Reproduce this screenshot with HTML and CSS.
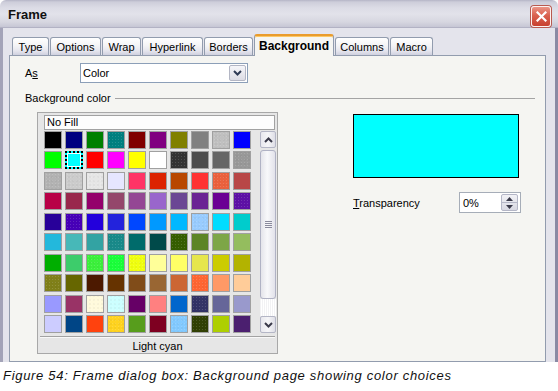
FILE: index.html
```html
<!DOCTYPE html>
<html>
<head>
<meta charset="utf-8">
<link rel="stylesheet" href="styles.css">
</head>
<body>
<div class="dialog">
  <div class="titlebar">
    <span class="title">Frame</span>
    <span class="close"><svg width="11" height="11" viewBox="0 0 11 11"><path d="M1.5 1.5L9.5 9.5M9.5 1.5L1.5 9.5" stroke="#fff" stroke-width="2.2" stroke-linecap="square"/></svg></span>
  </div>
  <div class="body">
    <div class="tabs">
      <div class="tab t-type">Type</div>
      <div class="tab t-options">Options</div>
      <div class="tab t-wrap">Wrap</div>
      <div class="tab t-hyper">Hyperlink</div>
      <div class="tab t-borders">Borders</div>
      <div class="tab t-bg active">Background</div>
      <div class="tab t-columns">Columns</div>
      <div class="tab t-macro">Macro</div>
    </div>
    <div class="page">
      <div class="row-as">
        <span class="lbl-as">A<u>s</u></span>
        <div class="select">
          <span>Color</span>
          <span class="sel-btn"><svg width="9" height="6" viewBox="0 0 9 6"><path d="M1 1l3.5 3.5L8 1" stroke="#2f3b55" stroke-width="2" fill="none"/></svg></span>
        </div>
      </div>
      <div class="section-head"><span>Background color</span><span class="rule"></span></div>
      <div class="content">
        <div class="picker">
          <div class="nofill">No Fill</div>
          <div class="grid-area">
            <div class="swatches">
              <i style="background:#000000"></i><i style="background:#000080"></i><i style="background:#008000"></i><i class="d" style="background-color:#008080"></i><i style="background:#800000"></i><i style="background:#800080"></i><i style="background:#808000"></i><i style="background:#808080"></i><i class="d" style="background-color:#c0c0c0"></i><i style="background:#0000ff"></i>
              <i style="background:#00ff00"></i><i class="sel" style="background:#00ffff"></i><i style="background:#ff0000"></i><i style="background:#ff00ff"></i><i style="background:#ffff00"></i><i style="background:#ffffff"></i><i class="d" style="background-color:#333333"></i><i style="background:#4c4c4c"></i><i style="background:#666666"></i><i class="d" style="background-color:#999999"></i>
              <i class="d" style="background-color:#b3b3b3"></i><i class="d" style="background-color:#cccccc"></i><i class="d" style="background-color:#e6e6e6"></i><i style="background:#e6e6ff"></i><i style="background:#ff3366"></i><i style="background:#dc2300"></i><i style="background:#b84700"></i><i style="background:#ff3333"></i><i class="d" style="background-color:#eb613d"></i><i style="background:#b84747"></i>
              <i style="background:#b80047"></i><i style="background:#99284c"></i><i style="background:#94006b"></i><i style="background:#94476b"></i><i style="background:#944794"></i><i style="background:#9966cc"></i><i style="background:#6b4794"></i><i style="background:#6b2394"></i><i style="background:#6b0094"></i><i class="d" style="background-color:#5e11a6"></i>
              <i style="background:#280099"></i><i class="d" style="background-color:#4700b8"></i><i style="background:#2300dc"></i><i style="background:#2323dc"></i><i style="background:#0047ff"></i><i style="background:#0099ff"></i><i style="background:#00b8ff"></i><i class="d" style="background-color:#99ccff"></i><i style="background:#00dcff"></i><i style="background:#00cccc"></i>
              <i style="background:#23b8dc"></i><i style="background:#47b8b8"></i><i style="background:#33a3a3"></i><i class="d" style="background-color:#198a8a"></i><i style="background:#006b6b"></i><i style="background:#004a4a"></i><i class="d" style="background-color:#355e00"></i><i style="background:#5c8526"></i><i style="background:#7da647"></i><i style="background:#94bd5e"></i>
              <i style="background:#00ae00"></i><i style="background:#3dcc6b"></i><i class="d" style="background-color:#3cf03c"></i><i class="d" style="background-color:#1aff3a"></i><i class="d" style="background-color:#f0ff10"></i><i style="background:#ffff99"></i><i style="background:#ffff66"></i><i style="background:#e6e64c"></i><i style="background:#cccc00"></i><i style="background:#b3b300"></i>
              <i class="d" style="background-color:#808019"></i><i style="background:#666600"></i><i style="background:#4c1900"></i><i style="background:#663300"></i><i style="background:#804c19"></i><i style="background:#996633"></i><i style="background:#cc6633"></i><i class="d" style="background-color:#ff6633"></i><i style="background:#ff9966"></i><i style="background:#ffcc99"></i>
              <i style="background:#9999ff"></i><i style="background:#993366"></i><i class="d" style="background-color:#fffadc"></i><i class="d" style="background-color:#ccffff"></i><i style="background:#660066"></i><i style="background:#ff8080"></i><i style="background:#0066cc"></i><i class="d" style="background-color:#333366"></i><i style="background:#666699"></i><i style="background:#9999cc"></i>
              <i style="background:#ccccff"></i><i style="background:#004586"></i><i style="background:#ff420e"></i><i class="d" style="background-color:#ffd320"></i><i style="background:#579d1c"></i><i style="background:#7e0021"></i><i class="d" style="background-color:#83caff"></i><i class="d" style="background-color:#314004"></i><i style="background:#aecf00"></i><i style="background:#4b1f6f"></i>
            </div>
            <div class="scrollbar">
              <span class="sb-btn"><svg width="9" height="6" viewBox="0 0 9 6"><path d="M1 5l3.5-3.5L8 5" stroke="#3a3a4a" stroke-width="2" fill="none"/></svg></span>
              <span class="sb-thumb"><span class="grip"></span></span>
              <span class="sb-track"></span>
              <span class="sb-btn"><svg width="9" height="6" viewBox="0 0 9 6"><path d="M1 1l3.5 3.5L8 1" stroke="#3a3a4a" stroke-width="2" fill="none"/></svg></span>
            </div>
          </div>
          <div class="sep"></div>
          <div class="status">Light cyan</div>
        </div>
        <div class="side">
          <div class="preview"></div>
          <div class="trans-row">
            <span class="lbl-trans"><u>T</u>ransparency</span>
            <div class="spin">
              <span>0%</span>
              <span class="spin-btns">
                <span class="sp-half"><svg width="7" height="4" viewBox="0 0 7 4"><path d="M0 4L3.5 0L7 4Z" fill="#3a3a4a"/></svg></span>
                <span class="sp-half"><svg width="7" height="4" viewBox="0 0 7 4"><path d="M0 0L3.5 4L7 0Z" fill="#3a3a4a"/></svg></span>
              </span>
            </div>
          </div>
        </div>
      </div>
    </div>
  </div>
</div>
<p class="caption">Figure 54: Frame dialog box: Background page showing color choices</p>
</body>
</html>
```
FILE: styles.css
```css
html, body { margin: 0; padding: 0; background: #ffffff; }
body {
  width: 558px;
  font-family: "Liberation Sans", Arial, sans-serif;
  font-size: 11px;
  color: #000;
}
.dialog {
  width: 558px;
  height: 362px;
  overflow: hidden;
  display: flex;
  flex-direction: column;
}
.titlebar {
  height: 28px;
  flex: none;
  box-sizing: border-box;
  display: flex;
  justify-content: space-between;
  align-items: center;
  padding: 0 7px 0 8px;
  border-radius: 6px 6px 0 0;
  background: linear-gradient(#b4b4c6 0, #cdcdda 2px, #dcdce6 8px, #e2e2ea 14px, #d6d6e0 22px, #c6c6d4 27px, #9e9eb4 28px);
}
.title {
  font-weight: bold;
  font-size: 13px;
  color: #101010;
  padding-top: 1px;
}
.close {
  width: 20px;
  height: 21px;
  box-sizing: border-box;
  margin-top: 4px;
  border: 1px solid #fdf2f0;
  border-radius: 3px;
  box-shadow: 0 0 0 1px #b85a50;
  background: linear-gradient(#eb9486, #d9614f 45%, #c8412f);
  display: flex;
  align-items: center;
  justify-content: center;
}
.body {
  flex: 1;
  display: flex;
  flex-direction: column;
  background: #e4e4ec;
  border-left: 3px solid #a3a3b8;
  border-right: 3px solid #8a8aa4;
  padding: 6px 9px 0 6px;
  min-height: 0;
}
.tabs {
  display: flex;
  align-items: flex-end;
  gap: 1px;
  height: 21px;
  flex: none;
  margin-left: 3px;
  position: relative;
  z-index: 1;
}
.tab {
  height: 18px;
  box-sizing: border-box;
  border: 1px solid #929cae;
  border-bottom: none;
  border-radius: 3px 3px 0 0;
  background: linear-gradient(#ffffff, #f4f4f6 45%, #e6e6ee 75%, #cfd0df);
  display: flex;
  align-items: center;
  justify-content: center;
  padding-top: 1px;
}
.tab.active {
  height: 22px;
  margin-bottom: -1px;
  background: #f5f5f2;
  border-color: #929cae;
  border-top: 2px solid #e99b2c;
  box-shadow: inset 0 1px #fbc866;
  font-weight: bold;
  font-size: 12px;
  padding-top: 0;
}
.t-type { width: 37px; }
.t-options { width: 51px; }
.t-wrap { width: 39px; }
.t-hyper { width: 61px; }
.t-borders { width: 49px; }
.t-bg { width: 80px; }
.t-columns { width: 54px; }
.t-macro { width: 43px; }

.page {
  flex: 1;
  background: #f5f5f2;
  border: 1px solid #929cae;
  padding: 7px 10px 0 15px;
}
.row-as {
  display: flex;
  align-items: center;
  height: 20px;
}
.lbl-as { width: 55px; }
.select {
  width: 168px;
  height: 20px;
  box-sizing: border-box;
  border: 1px solid #8c9fb8;
  background: #fff;
  display: flex;
  align-items: center;
  justify-content: space-between;
  padding: 0 1px 0 2px;
}
.sel-btn {
  width: 17px;
  height: 16px;
  box-sizing: border-box;
  border: 1px solid #b3b6c4;
  border-radius: 2px;
  background: linear-gradient(#f6f6f9, #dcdce4);
  display: flex;
  align-items: center;
  justify-content: center;
}
.section-head {
  display: flex;
  align-items: center;
  margin-top: 9px;
  line-height: 13px;
}
.rule {
  flex: 1;
  height: 1px;
  margin-left: 4px;
  background: #a4a4a4;
}
.content {
  display: flex;
  margin-top: 7px;
}
.picker {
  margin-left: 12px;
  width: 241px;
  height: 242px;
  box-sizing: border-box;
  border: 1px solid #a8a8a8;
  background: #e6e6e6;
  display: flex;
  flex-direction: column;
}
.nofill {
  margin: 2px 0 0 6px;
  width: 231px;
  height: 15px;
  box-sizing: border-box;
  border: 1px solid #a2a2a2;
  background: #fdfdfd;
  padding-left: 2px;
  line-height: 13px;
}
.grid-area {
  display: flex;
  margin: 1px 0 0 6px;
}
.swatches {
  display: grid;
  grid-template-columns: repeat(10, 18px);
  grid-template-rows: repeat(10, 18px);
  column-gap: 3px;
  row-gap: 2.44px;
}
.swatches i {
  display: block;
  box-sizing: border-box;
  border: 1px solid #a0a0a0;
}
.swatches i.d {
  background-image: radial-gradient(circle, rgba(255,255,255,0.14) 0.5px, transparent 0.8px),
                    radial-gradient(circle, rgba(0,0,0,0.1) 0.5px, transparent 0.8px);
  background-size: 3px 3px, 4px 4px;
  background-position: 0 0, 1px 2px;
}
.swatches i.sel {
  border: 2px dotted #000;
  box-shadow: inset 0 0 0 1px #fff;
}
.scrollbar {
  margin-left: 9px;
  width: 16px;
  height: 202px;
  display: flex;
  flex-direction: column;
}
.sb-btn {
  height: 17px;
  box-sizing: border-box;
  border: 1px solid #b4b6c6;
  border-radius: 2px;
  background: linear-gradient(90deg, #e8e8ee, #f6f6f8 50%, #dedee6);
  display: flex;
  align-items: center;
  justify-content: center;
  flex: none;
}
.sb-thumb {
  margin-top: 2px;
  height: 149px;
  box-sizing: border-box;
  border: 1px solid #b0b2c4;
  border-radius: 3px;
  background: linear-gradient(90deg, #e4e4ea, #f8f8fa 45%, #e2e2ea);
  display: flex;
  align-items: center;
  justify-content: center;
  flex: none;
}
.grip {
  width: 7px;
  height: 7px;
  background: repeating-linear-gradient(#8a8a9c 0 1px, transparent 1px 2px);
}
.sb-track {
  flex: 1;
  background: repeating-linear-gradient(90deg, #f2f2f4 0 1px, #ffffff 1px 2px);
}
.sep {
  margin: 3px 2px 0;
  height: 1px;
  background: #a2a2a2;
  box-shadow: 0 1px #f8f8f8;
}
.status {
  flex: 1;
  display: flex;
  align-items: center;
  justify-content: center;
  padding-top: 1px;
}
.side { margin-left: 75px; }
.preview {
  margin-top: 2px;
  width: 166px;
  height: 64px;
  box-sizing: border-box;
  border: 1px solid #000;
  background: #00ffff;
}
.trans-row {
  margin-top: 14px;
  display: flex;
  align-items: center;
  height: 21px;
}
.lbl-trans { width: 106px; }
.spin {
  width: 62px;
  height: 21px;
  box-sizing: border-box;
  border: 1px solid #a6adb8;
  background: #fff;
  display: flex;
  align-items: center;
  justify-content: space-between;
  padding: 0 2px 0 3px;
}
.spin-btns {
  width: 17px;
  height: 17px;
  box-sizing: border-box;
  border: 1px solid #b4b6c6;
  border-radius: 2px;
  display: flex;
  flex-direction: column;
  background: linear-gradient(#f2f2f6, #d8d8e2);
}
.sp-half {
  flex: 1;
  display: flex;
  align-items: center;
  justify-content: center;
}
.sp-half + .sp-half { border-top: 1px solid #b4b6c6; }
.caption {
  margin: 6px 0 0 3px;
  font-style: italic;
  font-size: 13px;
  letter-spacing: 0.7px;
  line-height: 15px;
  color: #111;
}
```
